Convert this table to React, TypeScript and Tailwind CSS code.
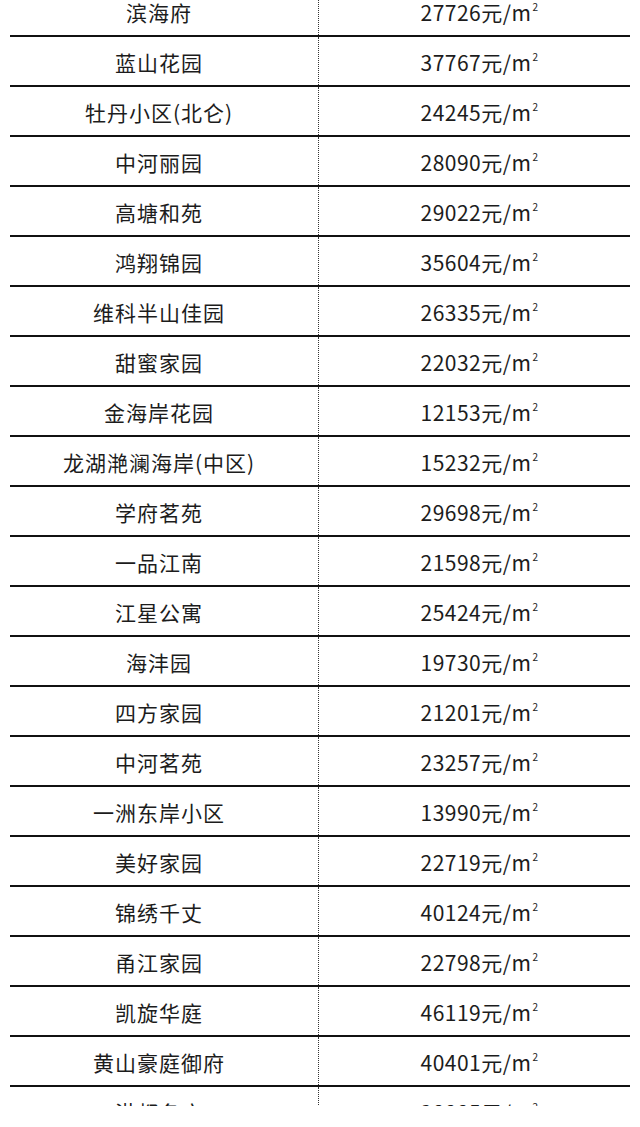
import React from "react";

const rows: [string, string][] = [
  ["滨海府", "27726"],
  ["蓝山花园", "37767"],
  ["牡丹小区(北仑)", "24245"],
  ["中河丽园", "28090"],
  ["高塘和苑", "29022"],
  ["鸿翔锦园", "35604"],
  ["维科半山佳园", "26335"],
  ["甜蜜家园", "22032"],
  ["金海岸花园", "12153"],
  ["龙湖滟澜海岸(中区)", "15232"],
  ["学府茗苑", "29698"],
  ["一品江南", "21598"],
  ["江星公寓", "25424"],
  ["海沣园", "19730"],
  ["四方家园", "21201"],
  ["中河茗苑", "23257"],
  ["一洲东岸小区", "13990"],
  ["美好家园", "22719"],
  ["锦绣千丈", "40124"],
  ["甬江家园", "22798"],
  ["凯旋华庭", "46119"],
  ["黄山豪庭御府", "40401"],
  ["港都名府", "28885"],
];

export default function App() {
  return (
    <div
      className="w-[640px] h-[1127px] bg-white text-[#1c1c1c]"
      style={{ fontFamily: '"Noto Sans CJK SC", "Noto Sans", sans-serif' }}
    >
      <div className="relative h-[1106px] overflow-hidden">
        <div className="mt-[-13px]">
          {rows.map(([name, price], i) => (
            <div key={i} className="relative h-[50px]">
              <div className="grid grid-cols-[319px_321px] h-[48px]">
                <div className="flex items-center justify-center text-[21px] tracking-[1px] border-r-[1.5px] border-dotted border-[#333] pt-[3px]">
                  {name}
                </div>
                <div className="flex items-center justify-center text-[21px] tracking-[0.5px] pt-[3px]">
                  <span>
                    {price}元/m
                    <sup className="text-[10px] relative top-[-10px] ml-[1px]">2</sup>
                  </span>
                </div>
              </div>
              <div className="mx-[10px] h-[2px] bg-[#111]" />
            </div>
          ))}
        </div>
      </div>
    </div>
  );
}
